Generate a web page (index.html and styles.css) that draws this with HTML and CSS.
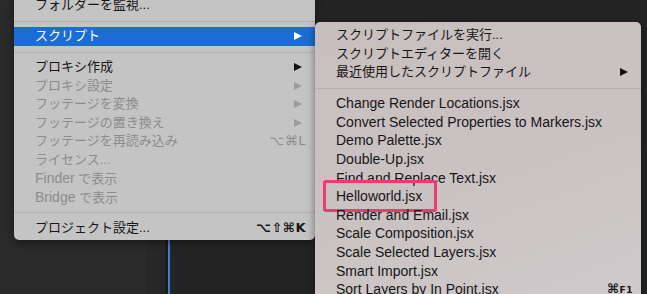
FILE: index.html
```html
<!DOCTYPE html>
<html lang="ja">
<head>
    <meta charset="UTF-8">
    <title>スクリプト メニュー</title>
    <link rel="stylesheet" href="styles.css">
</head>
<body>

<div class="workspace">
    <div class="panel panel-a"></div>
    <div class="panel panel-b"></div>
    <div class="panel panel-c"></div>
    <div class="timeline-line"></div>
    <div class="panel panel-d"></div>
</div>

<div class="menu menu-main">
    <div class="item">フォルダーを監視...</div>
    <div class="sep"></div>
    <div class="item active">スクリプト<span class="arrow"></span></div>
    <div class="sep"></div>
    <div class="item">プロキシ作成<span class="arrow"></span></div>
    <div class="item off">プロキシ設定<span class="arrow"></span></div>
    <div class="item off">フッテージを変換<span class="arrow"></span></div>
    <div class="item off">フッテージの置き換え<span class="arrow"></span></div>
    <div class="item off">フッテージを再読み込み<span class="key">⌥⌘L</span></div>
    <div class="item off">ライセンス...</div>
    <div class="item off"><span class="latin">Finder</span> で表示</div>
    <div class="item off"><span class="latin">Bridge</span> で表示</div>
    <div class="sep"></div>
    <div class="item">プロジェクト設定...<span class="key">⌥⇧⌘K</span></div>
</div>

<div class="menu menu-sub">
    <div class="item">スクリプトファイルを実行...</div>
    <div class="item">スクリプトエディターを開く</div>
    <div class="item">最近使用したスクリプトファイル<span class="arrow"></span></div>
    <div class="sep"></div>
    <div class="item latin">Change Render Locations.jsx</div>
    <div class="item latin">Convert Selected Properties to Markers.jsx</div>
    <div class="item latin">Demo Palette.jsx</div>
    <div class="item latin">Double-Up.jsx</div>
    <div class="item latin">Find and Replace Text.jsx</div>
    <div class="item latin"><span class="marked">Helloworld.jsx</span></div>
    <div class="item latin">Render and Email.jsx</div>
    <div class="item latin">Scale Composition.jsx</div>
    <div class="item latin">Scale Selected Layers.jsx</div>
    <div class="item latin">Smart Import.jsx</div>
    <div class="item latin">Sort Layers by In Point.jsx<span class="key">⌘<small>F1</small></span></div>
</div>

</body>
</html>
```

FILE: styles.css
```css
* { margin: 0; padding: 0; box-sizing: border-box; }
body {
    width: 647px;
    height: 294px;
    overflow: hidden;
    background: #252525;
    font-family: "Liberation Sans", "Noto Sans CJK JP", sans-serif;
    font-size: 13px;
    color: #161616;
    position: relative;
}

/* dark app behind the menus */
.workspace {
    display: flex;
    height: 294px;
}
.panel { height: 100%; }
.panel-a { width: 147px; background: #2a2a2a; }
.panel-b { width: 18px; background: #272727; }
.panel-c { width: 3px; background: #1b1b1b; }
.timeline-line { width: 2px; background: #3d7fcf; }
.panel-d { flex: 1; background: #242424; }

/* menus */
.menu {
    position: absolute;
    border-radius: 5px;
    box-shadow: 0 2px 8px rgba(0,0,0,0.45);
}
.menu-main {
    left: 14px;
    top: -8px;
    width: 301px;
    padding: 4px 0 3px;
    background: #c5c4c5;
}
.menu-sub {
    left: 315px;
    top: 22px;
    width: 326px;
    height: 290px;
    padding: 4px 0;
    background: linear-gradient(160deg, #c8bebe 0%, #cac3c3 55%, #cfcbcc 100%);
}

.item {
    position: relative;
    height: 18.6px;
    line-height: 18.6px;
    padding-left: 21px;
    white-space: nowrap;
}
.menu-main .item { height: 18.5px; line-height: 18.5px; }
.item.active { background: #1c6dd3; color: #fff; }
.item.off { color: #8c8b8c; }
.latin { font-size: 14px; }

.sep {
    height: 1px;
    margin: 6px 0 5.5px;
    background: #b0aeae;
}

.arrow {
    position: absolute;
    right: 13px;
    top: 5px;
    width: 0;
    height: 0;
    border-top: 4.5px solid transparent;
    border-bottom: 4.5px solid transparent;
    border-left: 8px solid #111;
}
.active .arrow { border-left-color: #fff; }
.off .arrow { border-left-color: #9c9b9c; }

.key {
    position: absolute;
    right: 9px;
    top: 0;
    font-family: "DejaVu Sans", sans-serif;
    font-size: 13px;
    font-weight: bold;
    letter-spacing: 0.5px;
}
.off .key { font-weight: normal; }
.key small { font-size: 9px; }
.menu-sub .key { right: 8px; font-size: 13px; }

/* red annotation box */
.marked {
    position: relative;
    display: inline-block;
}
.marked::after {
    content: "";
    position: absolute;
    left: -13px;
    right: -15px;
    top: -7.5px;
    bottom: -6px;
    border: 3px solid #ef3a6f;
    border-radius: 3px;
}
```
